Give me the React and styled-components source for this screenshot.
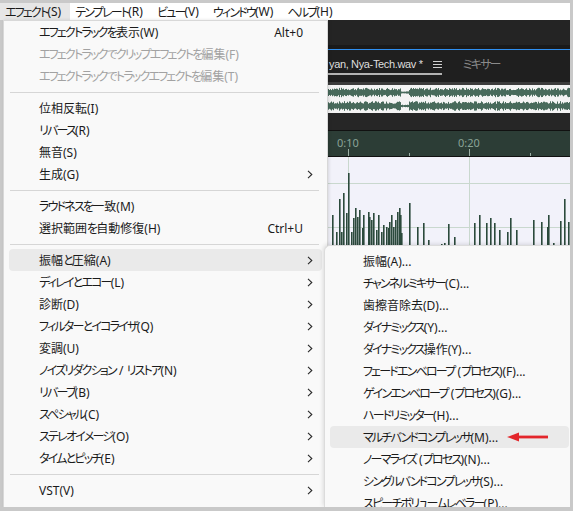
import styled, { createGlobalStyle } from 'styled-components';

const GlobalStyle = createGlobalStyle`
  html, body {
    margin: 0;
    padding: 0;
  }
  body {
    background: #c9c9c9;
    font-family: "Noto Sans", "Noto Sans CJK JP", sans-serif;
    font-feature-settings: "palt";
  }
`;

const topMenus = ['エフェクト(S)', 'テンプレート(R)', 'ビュー(V)', 'ウィンドウ(W)', 'ヘルプ(H)'];

const effectMenu = [
  { label: 'エフェクトラックを表示(W)', shortcut: 'Alt+0' },
  { label: 'エフェクトラックでクリップエフェクトを編集(F)', disabled: true },
  { label: 'エフェクトラックでトラックエフェクトを編集(T)', disabled: true },
  { separator: true },
  { label: '位相反転(I)' },
  { label: 'リバース(R)' },
  { label: '無音(S)' },
  { label: '生成(G)', sub: true },
  { separator: true },
  { label: 'ラウドネスを一致(M)' },
  { label: '選択範囲を自動修復(H)', shortcut: 'Ctrl+U' },
  { separator: true },
  { label: '振幅と圧縮(A)', sub: true, active: true },
  { label: 'ディレイとエコー(L)', sub: true },
  { label: '診断(D)', sub: true },
  { label: 'フィルターとイコライザ(Q)', sub: true },
  { label: '変調(U)', sub: true },
  { label: 'ノイズリダクション / リストア(N)', sub: true },
  { label: 'リバーブ(B)', sub: true },
  { label: 'スペシャル(C)', sub: true },
  { label: 'ステレオイメージ(O)', sub: true },
  { label: 'タイムとピッチ(E)', sub: true },
  { separator: true },
  { label: 'VST(V)', sub: true },
  { label: 'VST 3(T)', sub: true },
];

const amplitudeMenu = [
  { label: '振幅(A)...' },
  { label: 'チャンネルミキサー(C)...' },
  { label: '歯擦音除去(D)...' },
  { label: 'ダイナミックス(Y)...' },
  { label: 'ダイナミックス操作(Y)...' },
  { label: 'フェードエンベロープ (プロセス)(F)...' },
  { label: 'ゲインエンベロープ (プロセス)(G)...' },
  { label: 'ハードリミッター(H)...' },
  { label: 'マルチバンドコンプレッサ(M)...', active: true, marked: true },
  { label: 'ノーマライズ (プロセス)(N)...' },
  { label: 'シングルバンドコンプレッサ(S)...' },
  { label: 'スピーチボリュームレベラー(P)...' },
];

// 波形の棒 (x, 上端y) — 画面座標から起こしたもの
const bars = [
  [332, 215], [336, 232], [339, 199], [341, 232], [343, 193], [346, 213], [348, 173],
  [351, 232], [353, 218], [355, 208], [357, 217], [359, 210], [362, 228], [363, 215],
  [368, 212], [369, 217], [371, 220], [373, 213], [376, 230], [378, 215], [381, 232],
  [383, 225], [386, 227], [388, 228], [389, 222], [391, 215], [393, 227], [395, 220],
  [397, 212], [399, 208], [400, 215], [401, 233], [409, 203], [417, 227], [423, 223],
  [428, 240], [441, 244], [444, 243], [448, 224], [454, 237], [474, 223], [479, 215],
  [486, 223], [490, 218], [494, 223], [499, 230], [507, 232], [510, 218], [516, 230],
  [533, 220], [541, 222], [547, 227], [548, 215], [553, 243], [560, 221], [564, 199],
  [568, 222],
];

function seeded(seed) {
  let s = seed;
  return () => {
    s = (s * 9301 + 49297) % 233280;
    return s / 233280;
  };
}

function overviewPath() {
  const rnd = seeded(7);
  let d = '';
  for (let x = 0; x < 242; x += 1) {
    const quiet = x >= 73 && x <= 80;
    [7.5, 21].forEach((cy) => {
      const a = quiet ? 0.8 + rnd() * 0.6 : 2.2 + rnd() * 2.6;
      d += `M${x + 0.5} ${(cy - a).toFixed(1)}V${(cy + a).toFixed(1)}`;
    });
  }
  return d;
}

const overviewD = overviewPath();

// カナは UI フォントより幅が広いので詰める
function Jp({ text }) {
  return text
    .split(/([\u3040-\u30ff]+)/)
    .map((part, i) => (/^[\u3040-\u30ff]+$/.test(part) ? <Kana key={i}>{part}</Kana> : part));
}

function Chevron() {
  return (
    <svg width="6" height="9" viewBox="0 0 6 9">
      <polyline points="1,0.8 4.8,4.5 1,8.2" fill="none" stroke="#2a2a2a" strokeWidth="1.1" />
    </svg>
  );
}

function RedArrow() {
  return (
    <ArrowMark width="41" height="10" viewBox="0 0 41 10">
      <rect x="10" y="3.6" width="31" height="2.8" fill="#e3262b" />
      <polygon points="0,5 12,0.6 12,9.4" fill="#e3262b" />
    </ArrowMark>
  );
}

function MenuGlyph() {
  return (
    <svg width="9" height="9" viewBox="0 0 9 9">
      <path d="M0 1.5H9M0 4.5H9M0 7.5H9" stroke="#d0d0d0" strokeWidth="1.2" />
    </svg>
  );
}

export default function App() {
  return (
    <Frame>
      <GlobalStyle />
      <MenuBar>
        {topMenus.map((m, i) => (
          <TopItem key={m} $open={i === 0}>
            <Jp text={m} />
          </TopItem>
        ))}
      </MenuBar>

      <Workspace>
        <Gutter />
        <Dropdown>
          {effectMenu.map((item, i) =>
            item.separator ? (
              <Separator key={`s${i}`} />
            ) : (
              <Row key={item.label} $active={item.active} $disabled={item.disabled}>
                <Label>
                  <Jp text={item.label} />
                </Label>
                {item.shortcut && <Shortcut>{item.shortcut}</Shortcut>}
                {item.sub && (
                  <Arrow>
                    <Chevron />
                  </Arrow>
                )}
              </Row>
            )
          )}
        </Dropdown>

        <Editor>
          <TitleStrip />
          <BlueRule />
          <TabBar>
            <Tab>
              <TabName>yan, Nya-Tech.wav *</TabName>
              <MenuGlyph />
            </Tab>
            <TabLabel>
              <Jp text="ミキサー" />
            </TabLabel>
          </TabBar>
          <Overview>
            <svg width="242" height="28" viewBox="0 0 242 28">
              <path d={overviewD} stroke="#486a5b" strokeWidth="1" />
            </svg>
          </Overview>
          <OverviewFoot />
          <Ruler>
            <svg width="242" height="25" viewBox="0 0 242 25">
              <text x="20" y="16" textAnchor="middle" fill="#8aa396" fontSize="11" fontFamily="Noto Sans, sans-serif">0:10</text>
              <text x="141" y="16" textAnchor="middle" fill="#8aa396" fontSize="11" fontFamily="Noto Sans, sans-serif">0:20</text>
              <path d="M20.5 18V25M141.5 18V25M81.5 22V25M202.5 22V25" stroke="#9db0a6" strokeWidth="1" />
            </svg>
          </Ruler>
          <WavePanel>
            <svg width="242" height="88" viewBox="0 0 242 88">
              <path d="M20.5 0V88M141.5 0V88M0 26.5H242M0 70.5H242" stroke="#c9d8ce" strokeWidth="1" />
              {bars.map(([x, top]) => (
                <rect key={x} x={x - 328} y={top - 157} width="1.6" height={245 - top} fill="#2b4a3c" />
              ))}
            </svg>
          </WavePanel>
        </Editor>

        <SubMenu>
          {amplitudeMenu.map((item) => (
            <Row key={item.label} $active={item.active} $sub>
              <Label>
                <Jp text={item.label} />
              </Label>
              {item.marked && <RedArrow />}
            </Row>
          ))}
        </SubMenu>
      </Workspace>
    </Frame>
  );
}

const Frame = styled.div`
  width: 570px;
  height: 504px;
  padding-top: 3px;
  display: flex;
  flex-direction: column;
  overflow: hidden;
`;

const Kana = styled.span`
  letter-spacing: -1.8px;
`;

const MenuBar = styled.div`
  height: 17px;
  background: #ffffff;
  display: flex;
  align-items: stretch;
`;

const TopItem = styled.div`
  display: flex;
  align-items: center;
  padding: 0 9px 0 5px;
  font-size: 12px;
  color: #1a1a1a;
  background: ${(p) => (p.$open ? '#e6e6e6' : 'transparent')};
  white-space: nowrap;
`;

const Workspace = styled.div`
  position: relative;
  flex: 1;
  display: flex;
  min-height: 0;
`;

const Gutter = styled.div`
  width: 3px;
  background: #c9c9c9;
`;

const Dropdown = styled.div`
  width: 323px;
  background: #f9f9f9;
  border: 1px solid #d8d8d8;
  border-bottom: none;
  box-sizing: content-box;
  z-index: 1;
  box-shadow: 1px 0 3px rgba(0, 0, 0, 0.12);
`;

const Row = styled.div`
  height: 22px;
  margin: ${(p) => (p.$sub ? '0 1px 0 5px' : '0 5px')};
  padding-left: ${(p) => (p.$sub ? '33px' : '30px')};
  display: flex;
  align-items: center;
  border-radius: 4px;
  font-size: 12px;
  color: ${(p) => (p.$disabled ? '#a2a2a2' : '#1b1b1b')};
  background: ${(p) => (p.$active ? '#eaeaea' : 'transparent')};
  white-space: nowrap;
`;

const Label = styled.span`
  flex: 1;
`;

const Shortcut = styled.span`
  margin-right: 19px;
`;

const Arrow = styled.span`
  display: flex;
  margin-right: 9px;
  margin-left: auto;
`;

const Separator = styled.div`
  height: 1px;
  background: #d6d6d6;
  margin: 5px 8px 4px 6px;
`;

const Editor = styled.div`
  flex: 1;
  display: flex;
  flex-direction: column;
  background: #1e1e1e;
  overflow: hidden;
`;

const TitleStrip = styled.div`
  height: 25px;
  background: #242424;
  border-bottom: 4px solid #1a1a1a;
`;

const BlueRule = styled.div`
  height: 1px;
  background: #2f8ff0;
`;

const TabBar = styled.div`
  height: 32px;
  display: flex;
  align-items: flex-start;
  background: #1f1f1f;
`;

const Tab = styled.div`
  display: flex;
  align-items: center;
  gap: 10px;
  height: 18px;
  margin-top: 5px;
  padding-left: 1px;
  border-bottom: 2px solid #b3b3b3;
  white-space: nowrap;
`;

const TabName = styled.span`
  font-family: "Liberation Sans", sans-serif;
  font-size: 11px;
  letter-spacing: -0.35px;
  color: #dedede;
`;

const TabLabel = styled.div`
  height: 18px;
  margin-top: 5px;
  margin-left: 21px;
  display: flex;
  align-items: center;
  font-size: 12px;
  color: #8a8a8a;
`;

const Overview = styled.div`
  height: 28px;
  border-top: 3px solid #3c3c3c;
  background: #f4f4f4;
  display: flex;
`;

const OverviewFoot = styled.div`
  height: 17px;
  background: #262626;
`;

const Ruler = styled.div`
  height: 25px;
  background: #2c3d36;
  border-top: 1px solid #111111;
  border-bottom: 1px solid #111111;
  display: flex;
`;

const WavePanel = styled.div`
  flex: 1;
  background: #f2f2fa;
`;

const SubMenu = styled.div`
  position: absolute;
  left: 324px;
  top: 225px;
  width: 246px;
  bottom: 0;
  padding-top: 4px;
  box-sizing: border-box;
  background: #f9f9f9;
  border-left: 1px solid #dcdcdc;
  border-top: 1px solid #dcdcdc;
  border-top-left-radius: 6px;
  box-shadow: -1px -1px 4px rgba(0, 0, 0, 0.12);
  z-index: 2;
`;

const ArrowMark = styled.svg`
  margin-left: auto;
  margin-right: 21px;
  flex: none;
`;
